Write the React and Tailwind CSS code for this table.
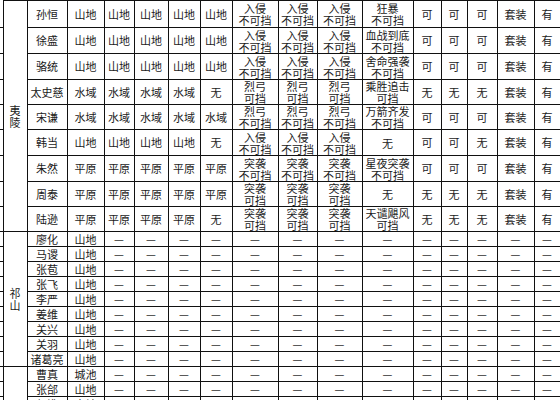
const widths = [3, 24, 40, 37, 30, 34, 32, 32, 46, 39, 45, 51, 28, 26, 30, 37, 26];

const yiling = [
  ["孙恒", ["山地", "山地", "山地", "山地", "山地"], ["入侵", "不可挡"], ["狂暴", "不可挡"], ["可", "可", "可"], 27],
  ["徐盛", ["山地", "山地", "山地", "山地", "山地"], ["入侵", "不可挡"], ["血战到底", "不可挡"], ["可", "可", "可"], 26],
  ["骆统", ["山地", "山地", "山地", "山地", "山地"], ["入侵", "不可挡"], ["舍命强袭", "不可挡"], ["可", "可", "可"], 26],
  ["太史慈", ["水域", "水域", "水域", "水域", "无"], ["烈弓", "可挡"], ["乘胜追击", "可挡"], ["无", "无", "无"], 25],
  ["宋谦", ["水域", "水域", "水域", "水域", "水域"], ["烈弓", "不可挡"], ["万箭齐发", "不可挡"], ["可", "可", "可"], 25],
  ["韩当", ["山地", "山地", "山地", "山地", "无"], ["入侵", "不可挡"], ["无"], ["可", "可", "无"], 26],
  ["朱然", ["平原", "平原", "平原", "平原", "平原"], ["突袭", "不可挡"], ["星夜突袭", "不可挡"], ["可", "可", "可"], 26],
  ["周泰", ["平原", "平原", "平原", "平原", "平原"], ["突袭", "可挡"], ["无"], ["无", "无", "无"], 25],
  ["陆逊", ["平原", "平原", "平原", "平原", "无"], ["突袭", "可挡"], ["天谴飓风", "可挡"], ["无", "无", "无"], 25],
];

const qishan = [
  ["廖化", "山地"],
  ["马谡", "山地"],
  ["张苞", "山地"],
  ["张飞", "山地"],
  ["李严", "山地"],
  ["姜维", "山地"],
  ["关兴", "山地"],
  ["关羽", "山地"],
  ["诸葛亮", "山地"],
];

const wei = [
  ["曹真", "城池"],
  ["张郃", "山地"],
  ["郭淮", "山地"],
];

const cell = "border border-[#111] p-0 text-center align-middle whitespace-nowrap overflow-hidden";

function Lines({ lines }) {
  return (
    <div className="leading-[12px]">
      {lines.map((l, i) => (
        <div key={i}>{l}</div>
      ))}
    </div>
  );
}

function Region({ label, span }) {
  return (
    <td rowSpan={span} className={cell + " text-[#1a1a1a]"}>
      <div className="leading-[12px]">
        {label.split("").map((c, i) => (
          <div key={i}>{c}</div>
        ))}
      </div>
    </td>
  );
}

function DashRow({ name, terrain, region }) {
  return (
    <tr className="h-[15px]">
      <td className="border-b border-[#111] p-0" />
      {region}
      <td className={cell}>{name}</td>
      <td className={cell}>{terrain}</td>
      {Array.from({ length: 13 }).map((_, i) => (
        <td key={i} className={cell + " text-[#333]"}>
          —
        </td>
      ))}
    </tr>
  );
}

export default function App() {
  return (
    <div className="w-[560px] h-[400px] overflow-hidden bg-white text-[#1a1a1a] text-[11px] leading-[13px] font-['Noto_Sans_CJK_SC','Noto_Sans_CJK_JP',sans-serif]">
      <table className="table-fixed border-collapse w-[560px]">
        <colgroup>
          {widths.map((w, i) => (
            <col key={i} style={{ width: w }} />
          ))}
        </colgroup>
        <tbody>
          {yiling.map(([name, terrain, skill, special, can, h], r) => (
            <tr key={name} style={{ height: h }}>
              <td className="border-b border-[#111] p-0" />
              {r === 0 && <Region label="夷陵" span={yiling.length} />}
              <td className={cell}>{name}</td>
              {terrain.map((t, i) => (
                <td key={i} className={cell}>
                  {t}
                </td>
              ))}
              {[0, 1, 2].map((i) => (
                <td key={"s" + i} className={cell}>
                  <Lines lines={skill} />
                </td>
              ))}
              <td className={cell}>
                <Lines lines={special} />
              </td>
              {can.map((c, i) => (
                <td key={"c" + i} className={cell}>
                  {c}
                </td>
              ))}
              <td className={cell}>套装</td>
              <td className={cell}>有</td>
            </tr>
          ))}
          {qishan.map(([name, terrain], r) => (
            <DashRow
              key={name}
              name={name}
              terrain={terrain}
              region={r === 0 ? <Region label="祁山" span={qishan.length} /> : null}
            />
          ))}
          {wei.map(([name, terrain], r) => (
            <DashRow
              key={name}
              name={name}
              terrain={terrain}
              region={r === 0 ? <td rowSpan={wei.length} className={cell} /> : null}
            />
          ))}
        </tbody>
      </table>
    </div>
  );
}
